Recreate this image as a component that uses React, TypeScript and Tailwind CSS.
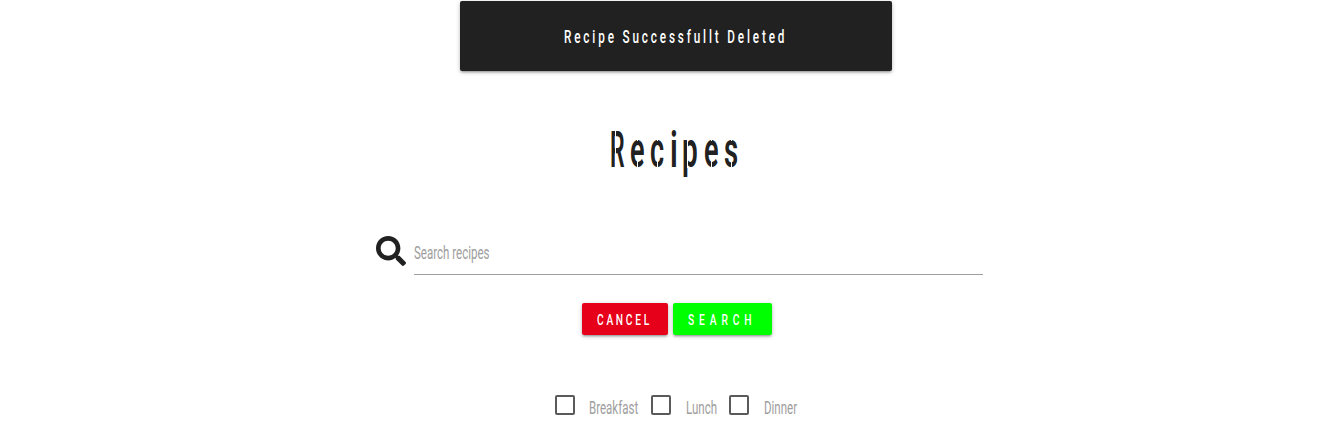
import React from 'react';

type CondensedProps = { children: string; box: string; className: string };

// Condensed lettering: the box reserves the final width, the inner span is narrowed.
function Condensed({ children, box, className }: CondensedProps) {
  return (
    <span className={`block overflow-visible whitespace-nowrap text-left ${box}`}>
      <span className={`inline-block origin-left ${className}`}>{children}</span>
    </span>
  );
}

// Stencil bridges are white bars laid over each letter of the heading.
const stemCut = ['left-[5px] top-[8px] h-[42px] w-[1px]'];
const bowlCuts = [
  'left-[7px] top-[16px] h-[7px] w-[1px]',
  'left-[7px] top-[43px] h-[7px] w-[1px]',
];
const title = [
  { char: 'R', cell: 'w-[20px]', scale: 'scale-x-[0.46]', cuts: stemCut },
  { char: 'e', cell: 'w-[20px]', scale: 'scale-x-[0.54]', cuts: bowlCuts },
  { char: 'c', cell: 'w-[20px]', scale: 'scale-x-[0.54]', cuts: bowlCuts },
  { char: 'i', cell: 'w-[12px]', scale: 'scale-x-[0.6]', cuts: [] },
  { char: 'p', cell: 'w-[22px]', scale: 'scale-x-[0.56]', cuts: ['left-[5px] top-[16px] h-[34px] w-[1px]'] },
  { char: 'e', cell: 'w-[20px]', scale: 'scale-x-[0.54]', cuts: bowlCuts },
  { char: 's', cell: 'w-[14px]', scale: 'scale-x-[0.55]', cuts: bowlCuts },
];

const meals = [
  { name: 'Breakfast', item: 'w-[96px]', box: 'w-[50px]', gap: 'ml-[14px]' },
  { name: 'Lunch', item: 'w-[78px]', box: 'w-[31px]', gap: 'ml-[15px]' },
  { name: 'Dinner', item: 'w-[69px]', box: 'w-[34px]', gap: 'ml-[15px]' },
];

export default function App() {
  return (
    <div className="h-[438px] overflow-hidden bg-white font-['Roboto',sans-serif] text-[#212121]">
      <div className="mt-px ml-[460px] flex h-[70px] w-[432px] rounded-[2px] bg-[#212121] pt-[24px] pl-[104px] text-white shadow-[0_2px_2px_0_rgba(0,0,0,0.14),0_3px_1px_-2px_rgba(0,0,0,0.12),0_1px_5px_0_rgba(0,0,0,0.2)]">
        <Condensed box="w-[224px]" className="scale-x-[0.67] text-[17.5px] leading-[24px] font-medium tracking-[4.26px]">
          Recipe Successfullt Deleted
        </Condensed>
      </div>

      <h1 className="mt-[47px] ml-[610px] flex h-[64px] w-[132px]">
        {title.map((t, i) => (
          <span key={i} className={`relative block h-[64px] shrink-0 ${t.cell}`}>
            <Condensed box="w-full" className={`text-[50px] leading-[64px] font-semibold ${t.scale}`}>
              {t.char}
            </Condensed>
            {t.cuts.map((cut) => (
              <span key={cut} className={`absolute bg-white ${cut}`} />
            ))}
          </span>
        ))}
      </h1>

      <form className="mt-[53px] ml-[376px] flex h-[40px] w-[607px]">
        <svg className="mt-px h-[30px] w-[30px]" viewBox="0 0 512 512" fill="#212121" aria-hidden="true">
          <path d="M505 442.7L405.3 343c-4.500-4.500-10.600-7-17-7H372c27.600-35.300 44-79.700 44-128C416 93.100 322.900 0 208 0S0 93.100 0 208s93.100 208 208 208c48.300 0 92.700-16.400 128-44v16.300c0 6.400 2.500 12.500 7 17l99.700 99.700c9.400 9.400 24.600 9.400 33.900 0l28.300-28.300c9.400-9.400 9.400-24.600.1-34zM208 336c-70.700 0-128-57.200-128-128 0-70.700 57.200-128 128-128 70.700 0 128 57.200 128 128 0 70.700-57.200 128-128 128z" />
        </svg>
        <label className="ml-[8px] block h-[40px] flex-1 border-b border-[#9e9e9e] pt-[6px] text-[#9e9e9e]">
          <Condensed box="w-[76px]" className="scale-x-[0.64] text-[18px] leading-[24px]">
            Search recipes
          </Condensed>
        </label>
      </form>

      <div className="mt-[28px] ml-[582px] flex gap-[5px] text-white">
        <button className="flex h-[32px] w-[86px] rounded-[2px] bg-[#e6001a] pt-[5px] pl-[15px] shadow-[0_2px_2px_0_rgba(0,0,0,0.14),0_3px_1px_-2px_rgba(0,0,0,0.12),0_1px_5px_0_rgba(0,0,0,0.2)]">
          <Condensed box="w-[56px]" className="scale-x-[0.66] text-[15.5px] leading-[24px] font-medium tracking-[4.1px]">
            CANCEL
          </Condensed>
        </button>
        <button className="flex h-[32px] w-[99px] rounded-[2px] bg-[#00ff00] pt-[5px] pl-[15px] shadow-[0_2px_2px_0_rgba(0,0,0,0.14),0_3px_1px_-2px_rgba(0,0,0,0.12),0_1px_5px_0_rgba(0,0,0,0.2)]">
          <Condensed box="w-[68px]" className="scale-x-[0.66] text-[15.5px] leading-[24px] font-medium tracking-[7.4px]">
            SEARCH
          </Condensed>
        </button>
      </div>

      <div className="mt-[60px] ml-[555px] flex text-[#9e9e9e]">
        {meals.map((m) => (
          <label key={m.name} className={`flex ${m.item}`}>
            <span className="block h-[20px] w-[20px] shrink-0 rounded-[2px] border-2 border-[#5a5a5a]" />
            <span className={`mt-px block ${m.gap}`}>
              <Condensed box={m.box} className="scale-x-[0.64] text-[18px] leading-[24px]">
                {m.name}
              </Condensed>
            </span>
          </label>
        ))}
      </div>
    </div>
  );
}
